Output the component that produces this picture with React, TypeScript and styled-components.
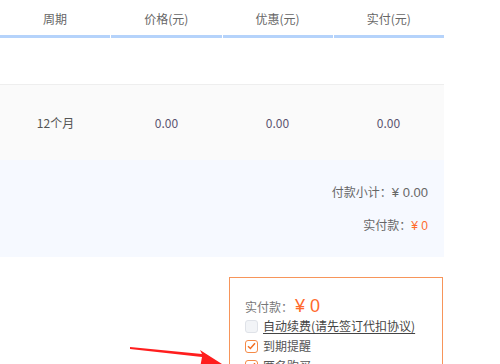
import styled, { createGlobalStyle } from 'styled-components';

const GlobalStyle = createGlobalStyle`
  html, body {
    margin: 0;
    padding: 0;
    background: #fff;
    overflow: hidden;
  }
  body {
    font-family: "Noto Sans CJK SC", "Noto Sans", "Liberation Sans", sans-serif;
    font-size: 12px;
    color: #666;
  }
`;

const Page = styled.div`
  position: relative;
  width: 500px;
  height: 364px;
  overflow: hidden;
`;

const Table = styled.div`
  width: 444px;
`;

const HeaderRow = styled.div`
  display: grid;
  grid-template-columns: repeat(4, 1fr);
  column-gap: 1px;
  height: 38px;
`;

const HeaderCell = styled.div`
  display: flex;
  align-items: center;
  justify-content: center;
  border-bottom: 3px solid #b5d3fb;
  color: #666;
  padding-top: 2px;
`;

const EmptyRow = styled.div`
  height: 46px;
  border-bottom: 1px solid #eeeeee;
`;

const DataRow = styled.div`
  display: grid;
  grid-template-columns: repeat(4, 1fr);
  height: 75px;
  background: #fafafa;
`;

const DataCell = styled.div<{ $num?: boolean }>`
  display: flex;
  align-items: center;
  justify-content: center;
  color: ${(p) => (p.$num ? '#5c5470' : '#555')};
`;

const Summary = styled.div`
  background: #f6f9ff;
  height: 97px;
  display: flex;
  flex-direction: column;
  align-items: flex-end;
  padding: 23px 16px 0 0;
  box-sizing: border-box;
  gap: 13px;
`;

const SumLine = styled.div`
  display: flex;
  align-items: baseline;
  height: 20px;
  color: #666;
`;

const Amount = styled.span<{ $accent?: boolean }>`
  font-family: "Liberation Sans", "Noto Sans CJK SC", sans-serif;
  font-size: ${(p) => (p.$accent ? '12px' : '13px')};
  color: ${(p) => (p.$accent ? '#ff6a2c' : '#666')};
`;

const PayBox = styled.div`
  margin: 20px 0 0 229px;
  width: 214px;
  height: 120px;
  border: 1px solid #f7955a;
  box-sizing: border-box;
  padding: 16px 0 0 15px;
`;

const TotalLine = styled.div`
  display: flex;
  align-items: center;
  height: 24px;
  color: #777;
  font-size: 12px;
`;

const BigPrice = styled.span`
  color: #ff6a2c;
  font-size: 18px;
  font-family: "Liberation Sans", "Noto Sans CJK SC", sans-serif;
  margin-left: 2px;
`;

const OptionList = styled.div`
  display: flex;
  flex-direction: column;
  gap: 6px;
  margin-top: 1px;
`;

const Option = styled.label`
  display: flex;
  align-items: center;
  gap: 5px;
  height: 14px;
  line-height: 14px;
  color: #555;
  font-size: 12px;
`;

const Box = styled.span<{ $checked?: boolean }>`
  width: 13px;
  height: 13px;
  box-sizing: border-box;
  border-radius: 3px;
  border: 1px solid ${(p) => (p.$checked ? '#f58a47' : '#dfe2e8')};
  background: ${(p) => (p.$checked ? '#fff' : '#f2f4f7')};
  display: flex;
  align-items: center;
  justify-content: center;
`;

const OptText = styled.span<{ $link?: boolean }>`
  text-decoration: ${(p) => (p.$link ? 'underline' : 'none')};
  text-underline-offset: 2px;
  color: ${(p) => (p.$link ? '#444' : '#555')};
`;

const Arrow = styled.svg`
  position: absolute;
  left: 0;
  top: 0;
  pointer-events: none;
`;

function Check({ checked }: { checked?: boolean }) {
  return (
    <Box $checked={checked}>
      {checked && (
        <svg width="9" height="8" viewBox="0 0 9 8">
          <path d="M1 4.2 L3.4 6.5 L8 1.2" fill="none" stroke="#f26f22" strokeWidth="1.5" />
        </svg>
      )}
    </Box>
  );
}

export default function App() {
  const heads = ['周期', '价格(元)', '优惠(元)', '实付(元)'];
  return (
    <Page>
      <GlobalStyle />
      <Table>
        <HeaderRow>
          {heads.map((h) => (
            <HeaderCell key={h}>{h}</HeaderCell>
          ))}
        </HeaderRow>
        <EmptyRow />
        <DataRow>
          <DataCell>12个月</DataCell>
          <DataCell $num>0.00</DataCell>
          <DataCell $num>0.00</DataCell>
          <DataCell $num>0.00</DataCell>
        </DataRow>
        <Summary>
          <SumLine>
            付款小计：<Amount>¥ 0.00</Amount>
          </SumLine>
          <SumLine>
            实付款：<Amount $accent>¥ 0</Amount>
          </SumLine>
        </Summary>
      </Table>
      <PayBox>
        <TotalLine>
          实付款：<BigPrice>¥ 0</BigPrice>
        </TotalLine>
        <OptionList>
          <Option>
            <Check />
            <OptText $link>自动续费(请先签订代扣协议)</OptText>
          </Option>
          <Option>
            <Check checked />
            <OptText>到期提醒</OptText>
          </Option>
          <Option>
            <Check checked />
            <OptText>匿名购买</OptText>
          </Option>
        </OptionList>
      </PayBox>
      <Arrow width="500" height="364" viewBox="0 0 500 364">
        <polygon points="130,347 202,354 200,350 222,364 200,368 202,357 130,349" fill="#ff1e1e" />
      </Arrow>
    </Page>
  );
}
